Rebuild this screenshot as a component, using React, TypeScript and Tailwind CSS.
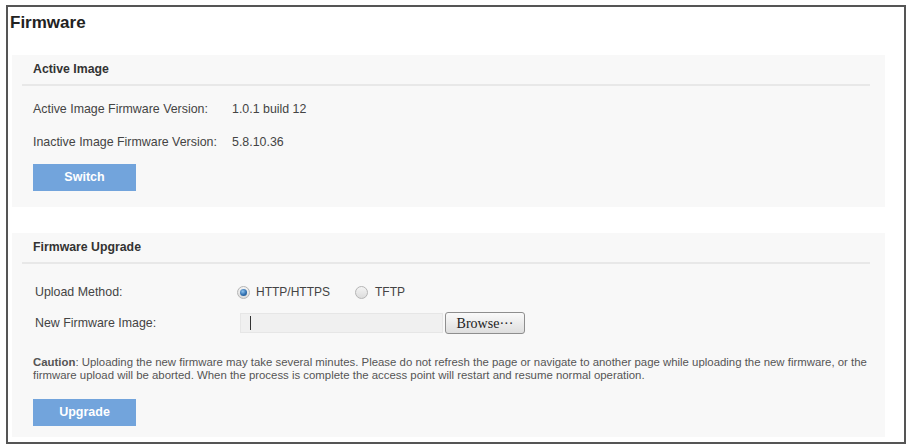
import React from 'react';

const font = { fontFamily: '"Liberation Sans", Arial, sans-serif' };

function Radio({ checked }: { checked: boolean }) {
  return (
    <span className="relative inline-flex h-[13px] w-[13px] items-center justify-center rounded-full border border-[#b5b5b5] bg-gradient-to-b from-[#f4f4f4] to-[#dcdcdc]">
      {checked && (
        <span className="h-[7px] w-[7px] rounded-full bg-[radial-gradient(circle_at_40%_35%,#8fc3ee,#2f6fb0_55%,#1d4d80)]" />
      )}
    </span>
  );
}

function BlueButton({ label }: { label: string }) {
  return (
    <button className="flex h-[27px] w-[103px] items-center justify-center bg-[#72a4dc] text-[12.5px] font-bold text-white">
      {label}
    </button>
  );
}

function SectionHead({ title }: { title: string }) {
  return (
    <>
      <div className="flex h-[29px] items-center pl-[21px] text-[12.3px] font-bold text-[#333]">{title}</div>
      <div className="ml-[10px] mr-[15px] h-[2px] bg-[#e8e8e8]" />
    </>
  );
}

export default function App() {
  return (
    <div className="h-[445px] w-[909px] bg-white pl-[6px] pt-[5px]" style={font}>
      <div className="flex h-[439px] w-[900px] flex-col border-2 border-[#555] pl-[4px] pr-[19px]">
        {/* Title */}
        <div className="-ml-[2px] flex h-[30px] items-center pt-[2px] text-[17px] font-bold text-[#222]">
          Firmware
        </div>

        {/* Active Image */}
        <div className="mt-[18px] bg-[#f8f8f8] pb-[16px]">
          <SectionHead title="Active Image" />
          <div className="mt-[12px] grid grid-cols-[199px_1fr] gap-y-[11px] pl-[21px] text-[12.4px] text-[#444]">
            <div className="flex h-[22px] items-center">Active Image Firmware Version:</div>
            <div className="flex h-[22px] items-center">1.0.1 build 12</div>
            <div className="flex h-[22px] items-center">Inactive Image Firmware Version:</div>
            <div className="flex h-[22px] items-center">5.8.10.36</div>
          </div>
          <div className="mt-[11px] pl-[21px]">
            <BlueButton label="Switch" />
          </div>
        </div>

        {/* Firmware Upgrade */}
        <div className="mt-[26px] bg-[#f8f8f8] pb-[11px]">
          <SectionHead title="Firmware Upgrade" />
          <div className="mt-[17px] flex h-[22px] items-center pl-[23px] text-[12.4px] text-[#444]">
            <div className="w-[202px]">Upload Method:</div>
            <label className="flex items-center text-[12px]">
              <Radio checked />
              <span className="ml-[6px]">HTTP/HTTPS</span>
            </label>
            <label className="ml-[25px] flex items-center text-[12px]">
              <Radio checked={false} />
              <span className="ml-[7px]">TFTP</span>
            </label>
          </div>
          <div className="mt-[9px] flex h-[22px] items-center pl-[23px] text-[12.4px] text-[#444]">
            <div className="w-[205px]">New Firmware Image:</div>
            <div className="flex h-[20px] w-[203px] items-center border border-[#e6e6e6] bg-[#f0f0f0] pl-[9px]">
              <span className="h-[14px] w-px bg-[#333]" />
            </div>
            <button
              className="ml-[2px] flex h-[22px] w-[80px] items-center justify-center rounded-[3px] border border-[#8e8e8e] bg-gradient-to-b from-[#fafafa] to-[#dedede] text-[14px] text-[#222]"
              style={{ fontFamily: '"Liberation Serif", "Times New Roman", serif' }}
            >
              Browse···
            </button>
          </div>
          <p className="mt-[22px] pl-[21px] pr-[8px] text-[11.4px] leading-[13px] text-[#555]">
            <b className="font-bold">Caution</b>: Uploading the new firmware may take several minutes. Please do not
            refresh the page or navigate to another page while uploading the new firmware, or the firmware upload will be
            aborted. When the process is complete the access point will restart and resume normal operation.
          </p>
          <div className="mt-[17px] pl-[21px]">
            <BlueButton label="Upgrade" />
          </div>
        </div>
      </div>
    </div>
  );
}
